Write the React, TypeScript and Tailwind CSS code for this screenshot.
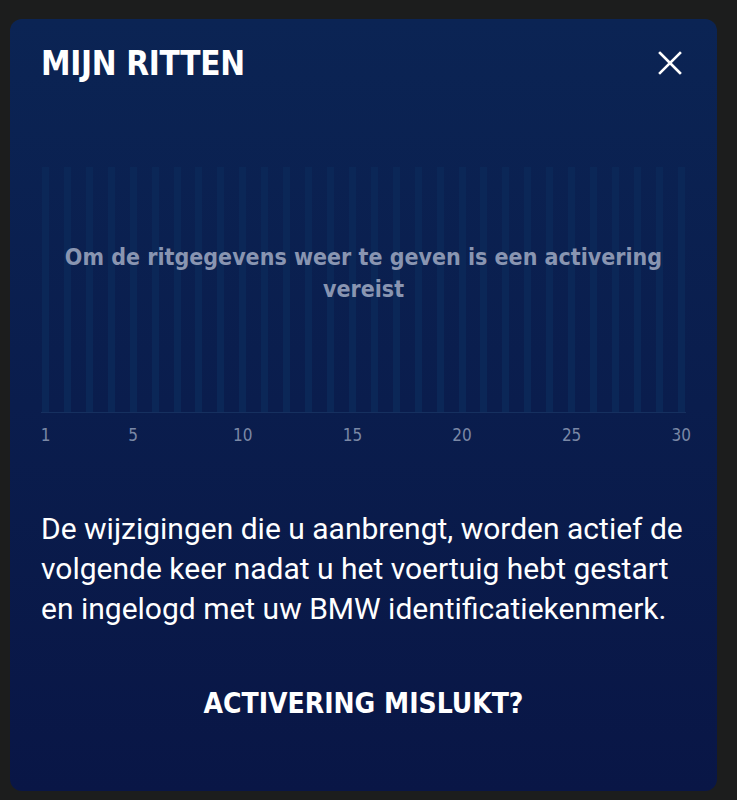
const days = Array.from({ length: 30 }, (_, i) => i + 1);
const shown = [1, 5, 10, 15, 20, 25, 30];

export default function App() {
  return (
    <div className="min-h-screen bg-[#1c1d1d] pt-[19px] pl-[10px] pr-[20px] pb-[9px]">
      <div className="h-[772px] rounded-[12px] bg-gradient-to-b from-[#0b2454] to-[#091646] px-[31px] pt-[26px] font-['DejaVu_Sans_Condensed','DejaVu_Sans',sans-serif] text-white">
        {/* Header */}
        <div className="flex items-center justify-between h-[36px]">
          <h1 className="text-[33px] font-bold leading-none tracking-[-0.3px]">MIJN RITTEN</h1>
          <button className="text-white mr-[4px]">
            <svg width="24" height="24" viewBox="0 0 24 24" fill="none" stroke="currentColor" strokeWidth="2.6" strokeLinecap="square">
              <path d="M2 2L22 22M22 2L2 22" />
            </svg>
          </button>
        </div>

        {/* Chart */}
        <div className="relative mt-[86px]">
          <div className="flex h-[246px] justify-between px-[1px] border-b border-[#16305f]">
            {days.map(d => (
              <div key={d} className="w-[7px] h-full bg-[#0b2757]" />
            ))}
          </div>
          <div className="absolute inset-x-0 top-[74px] text-center text-[23px] font-bold leading-[32px] text-[#8995b1] px-[20px]">
            Om de ritgegevens weer te geven is een activering vereist
          </div>
          <div className="flex justify-between px-[1px] mt-[10px] text-[17px] leading-[24px] text-[#7a88a6]">
            {days.map(d => (
              <div key={d} className="w-[7px] flex justify-center">
                <span className="whitespace-nowrap">{shown.includes(d) ? d : ''}</span>
              </div>
            ))}
          </div>
        </div>

        {/* Info */}
        <p className="mt-[62px] text-[30px] leading-[40px] text-white font-['Roboto',sans-serif]">
          De wijzigingen die u aanbrengt, worden actief de volgende keer nadat u het voertuig hebt gestart en ingelogd met uw BMW identificatiekenmerk.
        </p>

        <div className="mt-[57px] text-center text-[28px] font-bold leading-[36px]">
          ACTIVERING MISLUKT?
        </div>
      </div>
    </div>
  );
}
